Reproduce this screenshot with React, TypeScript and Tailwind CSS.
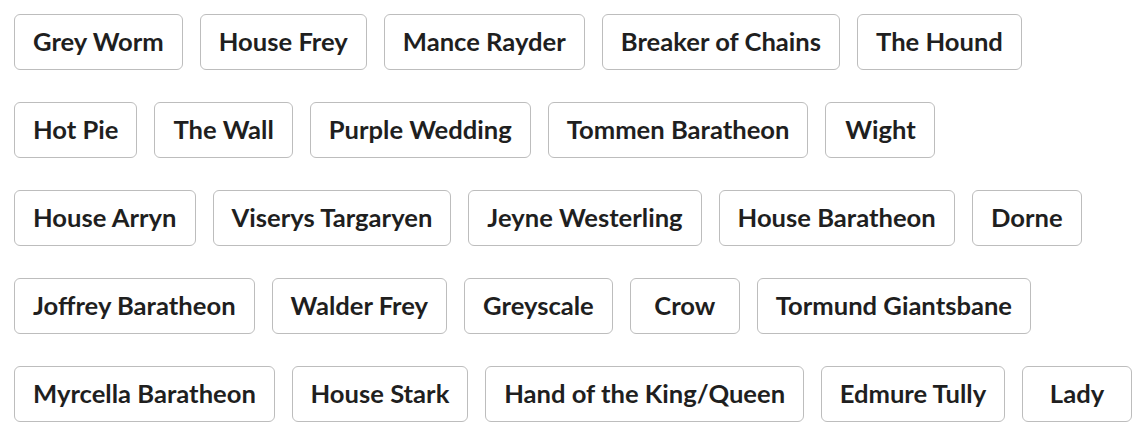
import React from "react";

const rows: string[][] = [
  ["Grey Worm", "House Frey", "Mance Rayder", "Breaker of Chains", "The Hound"],
  ["Hot Pie", "The Wall", "Purple Wedding", "Tommen Baratheon", "Wight"],
  ["House Arryn", "Viserys Targaryen", "Jeyne Westerling", "House Baratheon", "Dorne"],
  ["Joffrey Baratheon", "Walder Frey", "Greyscale", "Crow", "Tormund Giantsbane"],
  ["Myrcella Baratheon", "House Stark", "Hand of the King/Queen", "Edmure Tully", "Lady"],
];

export default function App() {
  return (
    <div
      className="w-[1146px] h-[430px] bg-white p-[14px] flex flex-col gap-y-8"
      style={{ fontFamily: "Lato, 'Noto Sans', sans-serif" }}
    >
      {rows.map((row, i) => (
        <div key={i} className="flex gap-x-[17px]">
          {row.map((t) => (
            <div
              key={t}
              className="min-w-[110px] text-center border border-[#bdbdbd] rounded-[6px] px-[18px] pt-[8px] pb-[10px] text-[25.6px] leading-[36px] font-bold text-[#1f1f1f] whitespace-nowrap"
            >
              {t}
            </div>
          ))}
        </div>
      ))}
    </div>
  );
}
